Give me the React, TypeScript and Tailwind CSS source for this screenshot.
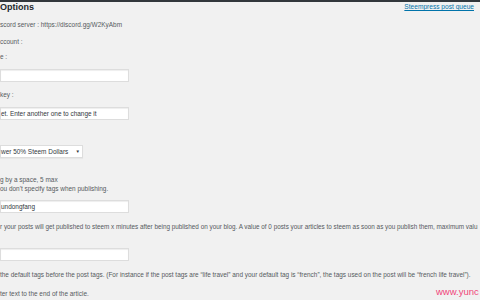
import React from "react";

const Line = ({ className = "", children }: { className?: string; children: React.ReactNode }) => (
  <div className={`h-[9px] leading-[9px] whitespace-nowrap ${className}`}>{children}</div>
);

const Input = ({ className = "", value = "" }: { className?: string; value?: string }) => (
  <div
    className={`h-[13px] w-[129px] bg-white border border-[#dddddd] shadow-[inset_0_1px_1px_rgba(0,0,0,0.07)] leading-[11px] text-[#32373c] whitespace-nowrap overflow-hidden ${className}`}
  >
    {value}
  </div>
);

export default function App() {
  return (
    <div
      className="relative w-[480px] h-[300px] overflow-hidden bg-[#f1f1f1] text-[#555a60] text-[6.45px]"
      style={{ fontFamily: '"Liberation Sans", Arial, sans-serif' }}
    >
      <div className="h-[2px] bg-[#32373c]" />
      <div className="flex h-[10px] items-center justify-between">
        <div className="text-[9px] font-bold leading-[10px] text-[#23282d]">Options</div>
        <a className="mr-[6px] text-[6.6px] leading-[10px] text-[#0073aa] underline">Steempress post queue</a>
      </div>
      <Line className="mt-[8px]">scord server : https://discord.gg/W2KyAbm</Line>
      <Line className="mt-[8px]">ccount :</Line>
      <Line className="mt-[6px]">e :</Line>
      <Input className="mt-[8px]" />
      <Line className="mt-[8px]">key :</Line>
      <Input className="mt-[8px]" value="et. Enter another one to change it" />
      <div className="mt-[25px] flex h-[13px] w-[83px] items-center justify-between border border-[#dddddd] bg-white pr-[2px] leading-[11px] text-[#32373c] shadow-[0_1px_1px_rgba(0,0,0,0.04)]">
        <span>wer 50% Steem Dollars</span>
        <span className="text-[4.5px]">▼</span>
      </div>
      <Line className="mt-[17px]">g by a space, 5 max</Line>
      <Line>ou don't specify tags when publishing.</Line>
      <Input className="mt-[7px]" value="undongfang" />
      <Line className="mt-[9px] text-[6.35px]">
        r your posts will get published to steem x minutes after being published on your blog. A value of 0 posts your
        articles to steem as soon as you publish them, maximum valu
      </Line>
      <Input className="mt-[17px]" />
      <Line className="mt-[9px]">
        the default tags before the post tags. (For instance if the post tags are “life travel” and your default tag is
        “french”, the tags used on the post will be “french life travel”).
      </Line>
      <Line className="mt-[10px]">ter text to the end of the article.</Line>
      <div className="absolute left-[436px] top-[286px] text-[9.5px] leading-[12px] text-[#f0457a] whitespace-nowrap">
        www.yunc
      </div>
    </div>
  );
}
